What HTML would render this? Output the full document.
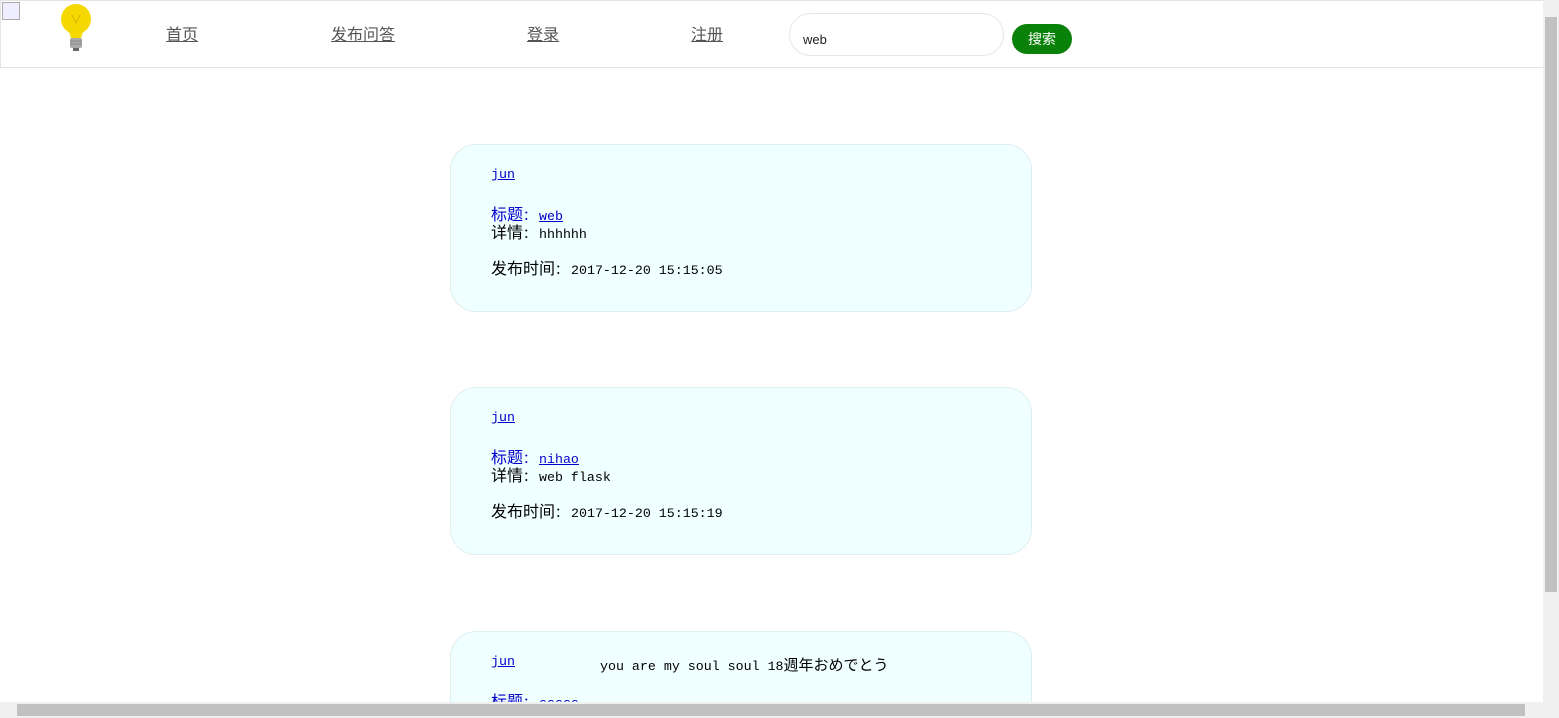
<!DOCTYPE html>
<html style="overflow:hidden;height:718px"><head><meta charset="utf-8"><style>
html,body{margin:0;width:1559px;height:718px;overflow:hidden;}
body{background:#fff;position:relative;font-family:"Liberation Mono","Noto Sans CJK SC",monospace;}
.hdr{position:absolute;left:0;top:0;width:1542px;height:66px;border:1px solid #e4e4e4;}
.nav{position:absolute;top:21px;font-family:"Liberation Sans","Noto Sans CJK SC",sans-serif;font-size:16px;color:#555;text-decoration:underline;}
.search{position:absolute;left:789px;top:13px;width:215px;height:43px;border:1px solid #e6e6e6;border-radius:22px;box-sizing:border-box;font-family:"Liberation Sans",sans-serif;font-size:13px;color:#222;padding:18px 0 0 13px;}
.btn{position:absolute;left:1012px;top:24px;width:60px;height:30px;background:#0a820a;border-radius:15px;color:#fff;font-family:"Liberation Sans","Noto Sans CJK SC",sans-serif;font-size:14px;text-align:center;line-height:30px;}
.card{position:absolute;left:450px;width:582px;height:168px;box-sizing:border-box;border:1px solid #dfeeee;border-radius:26px;background:#f0ffff;font-size:13.3px;color:#000;}
.card div{position:absolute;left:40px;white-space:nowrap;}
.z{font-family:"Noto Sans CJK SC",sans-serif;font-size:16px;display:inline-block;}
.c{display:inline-block;width:16px;font-family:"Noto Sans CJK SC",sans-serif;}
a{color:#0000cc;text-decoration:underline;}
.vs{position:absolute;left:1543px;top:0;width:16px;height:702px;background:#f0f0f0;}
.vs i{position:absolute;left:2px;top:17px;width:12px;height:575px;background:#c1c1c1;}
.hs{position:absolute;left:0;top:702px;width:1559px;height:16px;background:#f0f0f0;}
.hs i{position:absolute;left:17px;top:2px;width:1508px;height:12px;background:#c1c1c1;}
.wrap{position:absolute;left:0;top:0;width:1559px;height:702px;overflow:hidden;}
</style></head><body>
<div class="wrap">
<div class="hdr"></div>
<div style="position:absolute;left:2px;top:2px;width:18px;height:18px;border:1px solid #aaa;box-sizing:border-box;background:#eef"></div>
<svg style="position:absolute;left:57px;top:3px" width="38" height="50" viewBox="0 0 38 50">
<circle cx="19" cy="16" r="15" fill="#f5d800"/>
<path d="M11 26 L27 26 L24 35 L14 35Z" fill="#f5d800"/>
<rect x="13" y="35" width="12" height="10" rx="2" fill="#aaa"/>
<path d="M13 38h12M13 41h12" stroke="#888"/>
<rect x="16" y="45" width="6" height="3" fill="#666"/>
<path d="M15 12 L19 20 L23 12" stroke="#d6b400" fill="none"/>
</svg>
<span class="nav" style="left:166px">首页</span>
<span class="nav" style="left:331px">发布问答</span>
<span class="nav" style="left:527px">登录</span>
<span class="nav" style="left:691px">注册</span>
<div class="search">web</div>
<div class="btn">搜索</div>

<div class="card" style="top:144px">
<div style="top:22px"><a>jun</a></div>
<div style="top:56px"><a><span class="z">标题</span><span class="c">：</span>web</a></div>
<div style="top:74px"><span class="z">详情</span><span class="c">：</span>hhhhhh</div>
<div style="top:110px"><span class="z">发布时间</span><span class="c">：</span>2017-12-20 15:15:05</div>
</div>
<div class="card" style="top:387px">
<div style="top:22px"><a>jun</a></div>
<div style="top:56px"><a><span class="z">标题</span><span class="c">：</span>nihao</a></div>
<div style="top:74px"><span class="z">详情</span><span class="c">：</span>web flask</div>
<div style="top:110px"><span class="z">发布时间</span><span class="c">：</span>2017-12-20 15:15:19</div>
</div>
<div class="card" style="top:631px">
<div style="top:22px"><a>jun</a></div>
<div style="top:22px;left:149px">you are my soul soul 18<span class="z" style="font-size:15px">週年おめでとう</span></div>
<div style="top:56px"><a><span class="z">标题</span><span class="c">：</span>sssss</a></div>
</div>
</div>
<div class="vs"><i></i></div>
<div class="hs"><i></i></div>
</body></html>
